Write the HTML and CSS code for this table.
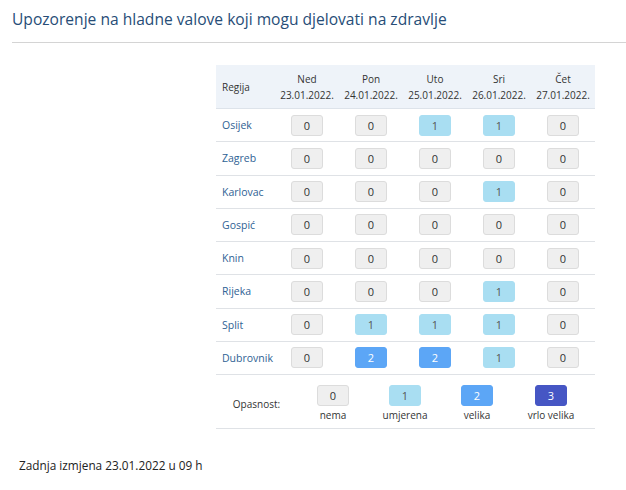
FILE: index.html
```html
<!DOCTYPE html>
<html lang="hr">
<head>
<meta charset="utf-8">
<title>Upozorenje na hladne valove</title>
<link rel="stylesheet" href="styles.css">
</head>
<body>
<div class="page">
  <h1 class="title">Upozorenje na hladne valove koji mogu djelovati na zdravlje</h1>
  <div class="rule"></div>
  <table class="warn">
    <colgroup>
      <col class="c-reg">
      <col class="c-day"><col class="c-day"><col class="c-day"><col class="c-day"><col class="c-day">
    </colgroup>
    <thead>
      <tr>
        <th class="reg">Regija</th>
        <th>Ned<br>23.01.2022.</th>
        <th>Pon<br>24.01.2022.</th>
        <th>Uto<br>25.01.2022.</th>
        <th>Sri<br>26.01.2022.</th>
        <th>Čet<br>27.01.2022.</th>
      </tr>
    </thead>
    <tbody>
      <tr><td class="reg">Osijek</td><td><span class="lv l0">0</span></td><td><span class="lv l0">0</span></td><td><span class="lv l1">1</span></td><td><span class="lv l1">1</span></td><td><span class="lv l0">0</span></td></tr>
      <tr><td class="reg">Zagreb</td><td><span class="lv l0">0</span></td><td><span class="lv l0">0</span></td><td><span class="lv l0">0</span></td><td><span class="lv l0">0</span></td><td><span class="lv l0">0</span></td></tr>
      <tr><td class="reg">Karlovac</td><td><span class="lv l0">0</span></td><td><span class="lv l0">0</span></td><td><span class="lv l0">0</span></td><td><span class="lv l1">1</span></td><td><span class="lv l0">0</span></td></tr>
      <tr><td class="reg">Gospić</td><td><span class="lv l0">0</span></td><td><span class="lv l0">0</span></td><td><span class="lv l0">0</span></td><td><span class="lv l0">0</span></td><td><span class="lv l0">0</span></td></tr>
      <tr><td class="reg">Knin</td><td><span class="lv l0">0</span></td><td><span class="lv l0">0</span></td><td><span class="lv l0">0</span></td><td><span class="lv l0">0</span></td><td><span class="lv l0">0</span></td></tr>
      <tr><td class="reg">Rijeka</td><td><span class="lv l0">0</span></td><td><span class="lv l0">0</span></td><td><span class="lv l0">0</span></td><td><span class="lv l1">1</span></td><td><span class="lv l0">0</span></td></tr>
      <tr><td class="reg">Split</td><td><span class="lv l0">0</span></td><td><span class="lv l1">1</span></td><td><span class="lv l1">1</span></td><td><span class="lv l1">1</span></td><td><span class="lv l0">0</span></td></tr>
      <tr><td class="reg">Dubrovnik</td><td><span class="lv l0">0</span></td><td><span class="lv l2">2</span></td><td><span class="lv l2">2</span></td><td><span class="lv l1">1</span></td><td><span class="lv l0">0</span></td></tr>
      <tr class="legend-row">
        <td colspan="6">
          <div class="legend">
            <div class="legend-label">Opasnost:</div>
            <div class="legend-item"><span class="lv l0">0</span><span class="legend-text">nema</span></div>
            <div class="legend-item"><span class="lv l1">1</span><span class="legend-text">umjerena</span></div>
            <div class="legend-item"><span class="lv l2">2</span><span class="legend-text">velika</span></div>
            <div class="legend-item wide"><span class="lv l3">3</span><span class="legend-text">vrlo velika</span></div>
          </div>
        </td>
      </tr>
    </tbody>
  </table>
  <p class="updated">Zadnja izmjena 23.01.2022 u 09 h</p>
</div>
</body>
</html>
```
FILE: styles.css
```css
html, body {
  margin: 0;
  padding: 0;
  background: #ffffff;
}
body {
  font-family: "Open Sans", "Noto Sans", sans-serif;
  color: #333333;
}
.page {
  padding-top: 8px;
}
.title {
  margin: 0 0 0 12px;
  font-size: 15.6px;
  font-weight: 400;
  line-height: 22px;
  color: #274d77;
}
.rule {
  margin: 12px 0 0 12px;
  height: 1px;
  background: #d4d4d4;
}
.warn {
  margin: 22px 0 0 216px;
  width: 379px;
  table-layout: fixed;
  border-collapse: collapse;
  font-size: 10px;
}
.c-reg {
  width: 59px;
}
.c-day {
  width: 64px;
}
.warn th {
  background: #eef3f9;
  font-weight: 400;
  color: #333333;
  height: 43px;
  line-height: 16px;
  padding: 0;
  text-align: center;
  white-space: nowrap;
  border-bottom: 1px solid #dde3ea;
}
.warn th.reg {
  text-align: left;
  padding-left: 6px;
}
.warn td {
  height: 32.25px;
  padding: 0;
  text-align: center;
  border-bottom: 1px solid #dfe2e6;
}
.warn td.reg {
  text-align: left;
  padding-left: 6px;
  color: #2f6294;
  font-size: 10.5px;
}
.lv {
  display: inline-block;
  box-sizing: border-box;
  width: 32px;
  height: 21px;
  line-height: 19px;
  border-radius: 3px;
  font-size: 11px;
  vertical-align: middle;
  border: 1px solid transparent;
}
.l0 {
  background: #efefef;
  border-color: #dcdcdc;
  color: #333333;
}
.l1 {
  background: #a9def2;
  border-color: #a9def2;
  color: #555555;
}
.l2 {
  background: #5ca6f6;
  border-color: #5ca6f6;
  color: #ffffff;
}
.l3 {
  background: #4656c4;
  border-color: #4656c4;
  color: #ffffff;
}
.legend-row td {
  height: 53px;
}
.legend {
  display: flex;
  align-items: center;
  padding-top: 4px;
}
.legend-label {
  flex: none;
  width: 81px;
  text-align: center;
  color: #333333;
}
.legend-item {
  flex: none;
  width: 72px;
  display: flex;
  flex-direction: column;
  align-items: center;
  gap: 1px;
}
.legend-item.wide {
  width: 76px;
}
.legend-text {
  line-height: 16px;
  color: #333333;
}
.updated {
  margin: 28px 0 0 19px;
  font-size: 11.8px;
  color: #222222;
}
```
